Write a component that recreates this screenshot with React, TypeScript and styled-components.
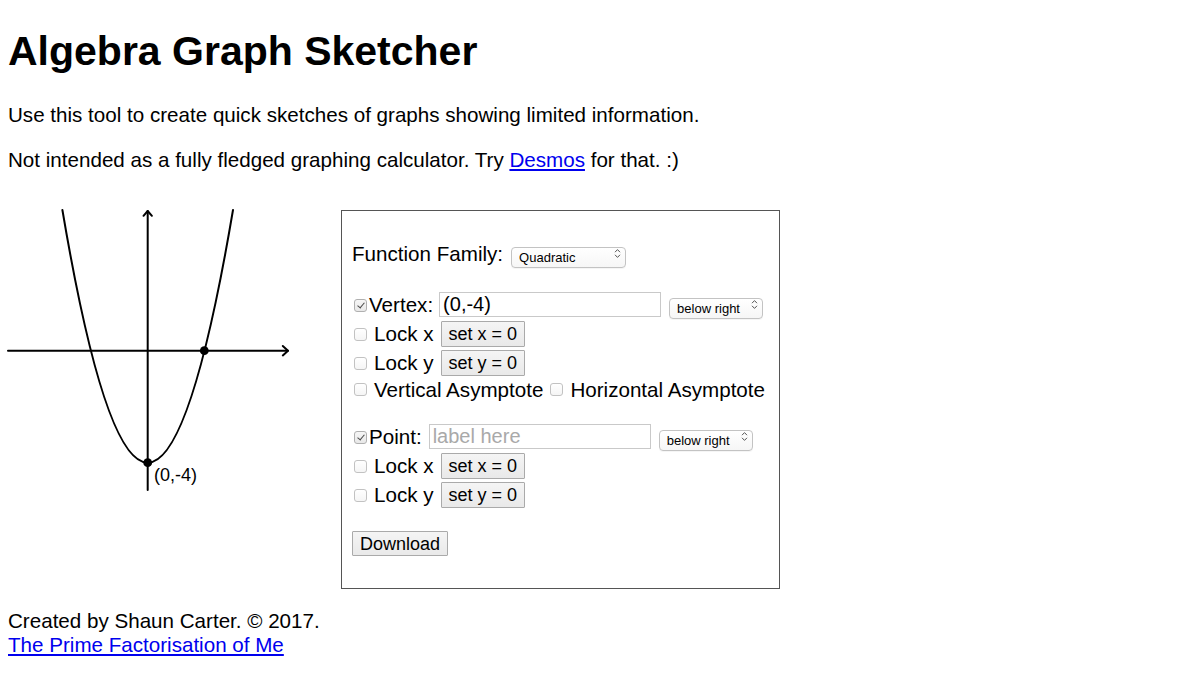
import React from "react";
import styled, { createGlobalStyle } from "styled-components";

const GlobalStyle = createGlobalStyle`
  html, body {
    margin: 0;
    padding: 0;
    background: #ffffff;
  }
  body {
    font-family: "Liberation Sans", Arial, Helvetica, sans-serif;
    font-size: 20.6px;
    color: #000;
  }
`;

const Page = styled.div`
  padding: 8px 8px 0 8px;
`;

const Title = styled.h1`
  font-size: 41px;
  line-height: 47px;
  font-weight: bold;
  margin: 20px 0 28px 0;
`;

const Para = styled.p`
  margin: 0 0 21px 0;
  line-height: 23.5px;
`;

const Link = styled.a`
  color: #0000ee;
  text-decoration: underline;
`;

const Main = styled.div`
  display: flex;
  align-items: flex-start;
  margin-top: 39px;
`;

const GraphSvg = styled.svg`
  display: block;
  flex: 0 0 auto;
  width: 300px;
  height: 285px;
  overflow: visible;
`;

const Panel = styled.form`
  box-sizing: border-box;
  width: 439px;
  margin-left: 33px;
  border: 1px solid #555;
  padding: 27px 10px 32px 10px;
  display: flex;
  flex-direction: column;
`;

const Section = styled.div<{ $top?: number }>`
  display: flex;
  flex-direction: column;
  margin-top: ${(p) => p.$top ?? 0}px;
`;

const Row = styled.div<{ $h?: number }>`
  display: flex;
  align-items: center;
  height: ${(p) => p.$h ?? 29}px;
  white-space: nowrap;
`;

const Label = styled.label<{ $ml?: number; $mr?: number }>`
  margin-left: ${(p) => p.$ml ?? 0}px;
  margin-right: ${(p) => p.$mr ?? 0}px;
  line-height: 23px;
`;

const Check = styled.input.attrs({ type: "checkbox" })<{ $ml?: number; $mr?: number }>`
  appearance: none;
  -webkit-appearance: none;
  box-sizing: border-box;
  width: 13px;
  height: 13px;
  margin: 1px ${(p) => p.$mr ?? 0}px 0 ${(p) => p.$ml ?? 2}px;
  border: 1px solid #c2c2c2;
  border-radius: 3px;
  background: linear-gradient(#ffffff, #f5f5f5);
  position: relative;
  flex: 0 0 auto;
  &:checked {
    background: linear-gradient(#f6f6f6, #e8e8e8);
    border-color: #b0b0b0;
  }
  &:checked::after {
    content: "";
    position: absolute;
    left: 4px;
    top: 1.5px;
    width: 3px;
    height: 6px;
    border: solid #4a4a4a;
    border-width: 0 1.3px 1.3px 0;
    transform: rotate(40deg);
  }
`;

const TextField = styled.input<{ $ml?: number }>`
  box-sizing: border-box;
  width: 222px;
  height: 25px;
  margin: 0 0 0 ${(p) => p.$ml ?? 0}px;
  padding: 0 3px;
  border: 1px solid #c9c9c9;
  font-family: "Liberation Sans", Arial, Helvetica, sans-serif;
  font-size: 20px;
  color: #000;
  outline: none;
  &::placeholder {
    color: #a9a9a9;
  }
`;

const SelectWrap = styled.span<{ $w: number; $ml?: number }>`
  position: relative;
  display: inline-block;
  width: ${(p) => p.$w}px;
  height: 21px;
  margin-left: ${(p) => p.$ml ?? 0}px;
  flex: 0 0 auto;
`;

const Select = styled.select`
  appearance: none;
  -webkit-appearance: none;
  box-sizing: border-box;
  width: 100%;
  height: 100%;
  margin: 0;
  padding: 0 16px 0 7px;
  border: 1px solid #c3c3c3;
  border-radius: 4px;
  background: linear-gradient(#ffffff, #f6f6f6);
  box-shadow: 0 1px 0 rgba(0, 0, 0, 0.04);
  font-family: "Liberation Sans", Arial, Helvetica, sans-serif;
  font-size: 13px;
  color: #000;
  outline: none;
`;

const Chevron = styled.svg`
  position: absolute;
  right: 5px;
  top: 5px;
  width: 7px;
  height: 11px;
  pointer-events: none;
`;

const SetButton = styled.button<{ $ml?: number; $h?: number }>`
  box-sizing: border-box;
  height: ${(p) => p.$h ?? 26}px;
  margin: 0 0 0 ${(p) => p.$ml ?? 0}px;
  padding: 0 7px 0 7px;
  border: 1px solid #aaaaaa;
  border-radius: 1px;
  background: linear-gradient(#f5f5f5, #e9e9e9);
  font-family: "Liberation Sans", Arial, Helvetica, sans-serif;
  font-size: 18px;
  color: #000;
  line-height: 1;
  flex: 0 0 auto;
`;

const Footer = styled.footer`
  margin-top: 20px;
  line-height: 23.5px;
`;

const FooterLine = styled.div``;

function Dropdown({ w, ml, value, options }: { w: number; ml?: number; value: string; options: string[] }) {
  return (
    <SelectWrap $w={w} $ml={ml}>
      <Select defaultValue={value}>
        {options.map((o) => (
          <option key={o} value={o}>
            {o}
          </option>
        ))}
      </Select>
      <Chevron viewBox="0 0 7 11">
        <path d="M1 4.2 L3.5 1.6 L6 4.2 M1 6.8 L3.5 9.4 L6 6.8" fill="none" stroke="#555" strokeWidth="1" />
      </Chevron>
    </SelectWrap>
  );
}

const positions = ["above left", "above right", "below left", "below right"];

function LockRow({ axis }: { axis: string }) {
  return (
    <Row>
      <Check $mr={7} />
      <Label>Lock {axis}</Label>
      <SetButton type="button" $ml={7}>
        set {axis} = 0
      </SetButton>
    </Row>
  );
}

function Graph() {
  return (
    <GraphSvg viewBox="0 0 300 285">
      <g fill="none" stroke="#000" strokeWidth="2" strokeLinecap="round" strokeLinejoin="round">
        <line x1="139.7" y1="1" x2="139.7" y2="280" />
        <polyline points="135.5,5.8 139.7,1 143.9,5.8" />
        <line x1="0" y1="140.7" x2="280" y2="140.7" />
        <polyline points="274.8,136 280,140.7 274.8,145.4" />
        <path d="M54.4 0 Q139.7 505.4 225 0" />
      </g>
      <circle cx="196.3" cy="140.7" r="4.4" fill="#000" />
      <circle cx="139.7" cy="252.7" r="4.4" fill="#000" />
      <text x="146" y="270.7" fontFamily="'Liberation Sans', Arial, sans-serif" fontSize="18" fill="#000">
        (0,-4)
      </text>
    </GraphSvg>
  );
}

export default function App() {
  return (
    <>
      <GlobalStyle />
      <Page>
        <Title>Algebra Graph Sketcher</Title>
        <Para>Use this tool to create quick sketches of graphs showing limited information.</Para>
        <Para>
          Not intended as a fully fledged graphing calculator. Try <Link href="#">Desmos</Link> for that. :)
        </Para>
        <Main>
          <Graph />
          <Panel onSubmit={(e) => e.preventDefault()}>
            <Row $h={30}>
              <Label $mr={8}>Function Family:</Label>
              <Dropdown w={115} value="Quadratic" options={["Linear", "Quadratic", "Cubic", "Exponential", "Reciprocal"]} />
            </Row>
            <Section $top={22}>
              <Row>
                <Check defaultChecked $mr={2} />
                <Label>Vertex:</Label>
                <TextField $ml={6} defaultValue="(0,-4)" />
                <Dropdown w={94} ml={8} value="below right" options={positions} />
              </Row>
              <LockRow axis="x" />
              <LockRow axis="y" />
              <Row $h={24}>
                <Check $mr={7} />
                <Label>Vertical Asymptote</Label>
                <Check $ml={7} $mr={7} />
                <Label>Horizontal Asymptote</Label>
              </Row>
            </Section>
            <Section $top={21}>
              <Row>
                <Check defaultChecked $mr={2} />
                <Label>Point:</Label>
                <TextField $ml={7} placeholder="label here" />
                <Dropdown w={94} ml={8} value="below right" options={positions} />
              </Row>
              <LockRow axis="x" />
              <LockRow axis="y" />
            </Section>
            <Section $top={22}>
              <Row $h={25}>
                <SetButton type="button" $h={25}>
                  Download
                </SetButton>
              </Row>
            </Section>
          </Panel>
        </Main>
        <Footer>
          <FooterLine>Created by Shaun Carter. © 2017.</FooterLine>
          <FooterLine>
            <Link href="#">The Prime Factorisation of Me</Link>
          </FooterLine>
        </Footer>
      </Page>
    </>
  );
}
